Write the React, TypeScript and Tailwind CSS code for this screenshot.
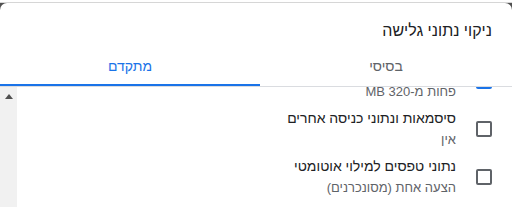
import React from "react";

function Checkbox({ checked }: { checked?: boolean }) {
  if (checked) {
    return (
      <div className="w-4 h-4 rounded-[2px] bg-[#1a73e8] flex items-center justify-center shrink-0">
        <svg width="12" height="12" viewBox="0 0 24 24" fill="none" stroke="white" strokeWidth="3">
          <path d="M5 12l5 5L20 7" />
        </svg>
      </div>
    );
  }
  return <div className="w-4 h-4 rounded-[2px] border-2 border-[#5f6368] shrink-0" />;
}

function Item({ title, sub, checked }: { title?: string; sub: string; checked?: boolean }) {
  return (
    <div className="h-[48px] flex items-center gap-5 pr-5">
      <Checkbox checked={checked} />
      <div className="flex flex-col gap-[2px]">
        <div className="h-[20px] text-[14px] leading-[20px] text-[#202124]">{title}</div>
        <div className="text-[13px] leading-[20px] text-[#5f6368]">{sub}</div>
      </div>
    </div>
  );
}

export default function App() {
  return (
    <div
      dir="rtl"
      className="w-[512px] h-[207px] overflow-hidden bg-white flex flex-col"
      style={{ fontFamily: '"Liberation Sans", Arial, sans-serif' }}
    >
      <div className="h-[2px] bg-white shrink-0" />
      <div className="h-px bg-[#d6d6d6] shrink-0" />
      <div className="flex-1 bg-[#505050] flex flex-col min-h-0">
        <div className="flex-1 bg-white rounded-t-[7px] flex flex-col min-h-0">
          <div className="pt-4 pr-5 h-[40px] text-[16px] leading-[24px] text-[#202124] shrink-0">
            ניקוי נתוני גלישה
          </div>
          <div className="flex border-b border-[#dadce0] shrink-0">
            <div className="w-[252px] h-[43px] pt-[13px] text-center text-[14px] leading-[20px] text-[#5f6368]">
              בסיסי
            </div>
            <div className="relative flex-1 h-[43px] pt-[13px] text-center text-[14px] leading-[20px] font-medium text-[#1a73e8]">
              מתקדם
              <div className="absolute bottom-0 left-0 right-0 h-[2px] bg-[#1a73e8]" />
            </div>
          </div>
          <div className="flex-1 flex min-h-0">
            <div className="flex-1 overflow-hidden">
              <div className="-mt-[30px]">
                <Item sub="פחות מ-320 MB" checked />
                <Item title="סיסמאות ונתוני כניסה אחרים" sub="אין" />
                <Item title="נתוני טפסים למילוי אוטומטי" sub="הצעה אחת (מסונכרנים)" />
              </div>
            </div>
            <div className="w-[17px] bg-[#f1f1f1] shrink-0 flex justify-center pt-[7px]">
              <svg width="8" height="5" viewBox="0 0 8 5">
                <path d="M0 5 L4 0 L8 5 Z" fill="#505050" />
              </svg>
            </div>
          </div>
        </div>
      </div>
    </div>
  );
}
